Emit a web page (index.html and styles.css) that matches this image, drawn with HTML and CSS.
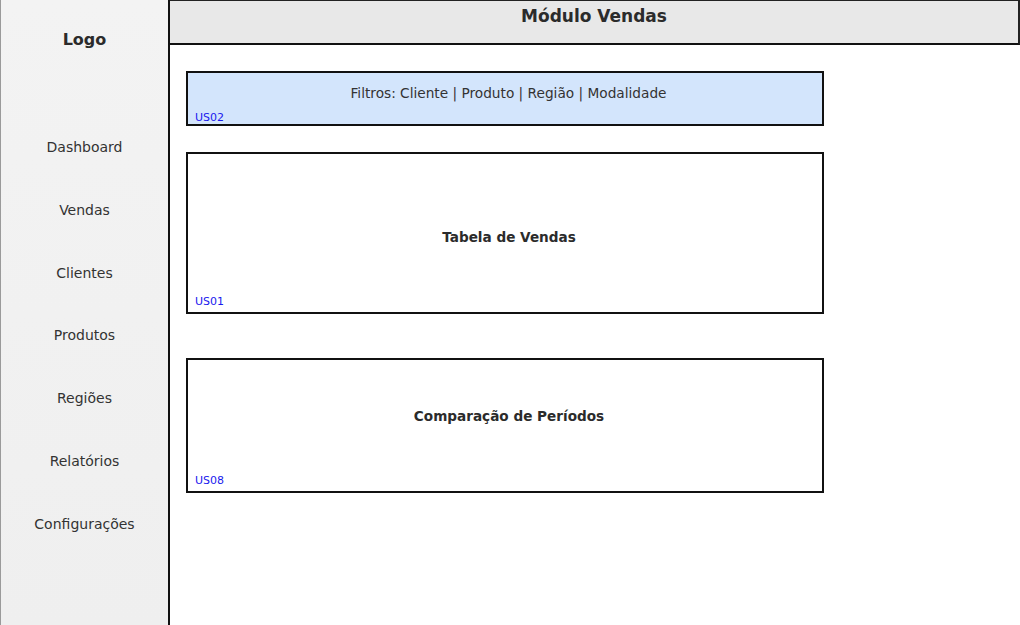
FILE: index.html
```html
<!DOCTYPE html>
<html lang="pt">
<head>
<meta charset="utf-8">
<title>Módulo Vendas</title>
<link rel="stylesheet" href="styles.css">
</head>
<body>
<div class="app">
  <aside class="sidebar">
    <div class="logo">Logo</div>
    <nav class="nav">
      <div class="nav-item">Dashboard</div>
      <div class="nav-item">Vendas</div>
      <div class="nav-item">Clientes</div>
      <div class="nav-item">Produtos</div>
      <div class="nav-item">Regiões</div>
      <div class="nav-item">Relatórios</div>
      <div class="nav-item">Configurações</div>
    </nav>
  </aside>
  <main class="main">
    <header class="header">Módulo Vendas</header>
    <section class="content">
      <div class="box box-filter">
        <div class="filter-text">Filtros: Cliente | Produto | Região | Modalidade</div>
        <div class="tag tag-filter">US02</div>
      </div>
      <div class="box box-table">
        <div class="box-title title-table">Tabela de Vendas</div>
        <div class="tag tag-table">US01</div>
      </div>
      <div class="box box-compare">
        <div class="box-title title-compare">Comparação de Períodos</div>
        <div class="tag tag-compare">US08</div>
      </div>
    </section>
  </main>
</div>
</body>
</html>
```

FILE: styles.css
```css
* { box-sizing: border-box; }
html, body {
  margin: 0;
  padding: 0;
  width: 1020px;
  height: 625px;
  overflow: hidden;
  background: #ffffff;
  font-family: "DejaVu Sans", "Liberation Sans", sans-serif;
  color: #333333;
}
.app {
  display: flex;
  width: 1020px;
  height: 625px;
}
.sidebar {
  width: 170px;
  flex: 0 0 170px;
  height: 625px;
  background: linear-gradient(#f3f3f3, #efefef);
  border-left: 1px solid #9a9a9a;
  border-right: 2px solid #111111;
  display: flex;
  flex-direction: column;
  align-items: center;
}
.logo {
  margin-top: 29px;
  height: 22px;
  line-height: 22px;
  font-size: 16px;
  font-weight: bold;
  color: #2b2b2b;
}
.nav {
  margin-top: 65px;
  display: flex;
  flex-direction: column;
  align-items: center;
  width: 100%;
}
.nav-item {
  height: 62.83px;
  line-height: 62.83px;
  font-size: 14px;
  color: #333333;
  text-align: center;
}
.main {
  flex: 1;
  display: flex;
  flex-direction: column;
}
.header {
  height: 45px;
  width: 850px;
  background: #e8e8e8;
  border-top: 1px solid #222222;
  border-right: 2px solid #222222;
  border-bottom: 2px solid #111111;
  text-align: center;
  font-size: 17px;
  font-weight: bold;
  line-height: 30px;
  color: #2b2b2b;
}
.content {
  padding: 26px 0 0 16px;
  display: flex;
  flex-direction: column;
}
.box {
  width: 638px;
  border: 2px solid #111111;
  display: flex;
  flex-direction: column;
  background: #ffffff;
}
.box-filter {
  height: 55px;
  background: #d3e5fc;
}
.box-table {
  height: 162px;
  margin-top: 26px;
}
.box-compare {
  height: 135px;
  margin-top: 44px;
}
.filter-text {
  margin-top: 11px;
  padding-left: 7px;
  text-align: center;
  font-size: 13.7px;
  line-height: 18px;
  color: #333333;
}
.box-title {
  padding-left: 8px;
  text-align: center;
  font-size: 13.6px;
  font-weight: bold;
  line-height: 18px;
  color: #2b2b2b;
}
.title-table { margin-top: 74px; }
.title-compare { margin-top: 47px; }
.tag {
  margin-top: auto;
  padding-left: 7px;
  font-size: 11px;
  line-height: 14px;
  color: #1a1aee;
}
.tag-filter { padding-bottom: 0; margin-bottom: -1px; }
.tag-table { padding-bottom: 3px; }
.tag-compare { padding-bottom: 3px; }
```
